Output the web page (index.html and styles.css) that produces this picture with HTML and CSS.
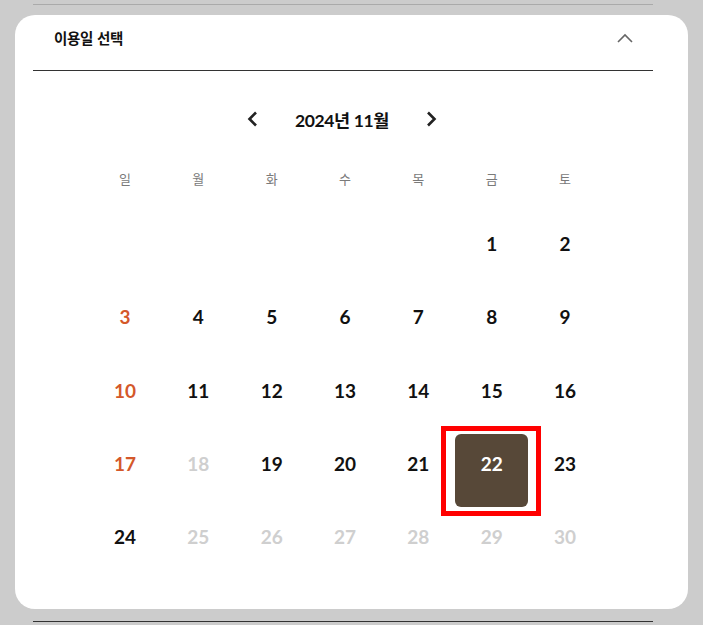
FILE: index.html
```html
<!DOCTYPE html>
<html lang="ko">
<head>
    <meta charset="UTF-8">
    <meta name="viewport" content="width=device-width, initial-scale=1.0">
    <title>이용일 선택</title>
    <link rel="stylesheet" href="styles.css">
</head>
<body>
    <div class="rule rule-top"></div>

    <div class="card">
        <div class="card-header">
            <h2>이용일 선택</h2>
            <svg class="toggle" width="16" height="10" viewBox="0 0 16 10">
                <path d="M1 9 L8 2 L15 9" fill="none" stroke="#666" stroke-width="1.6"/>
            </svg>
        </div>

        <div class="month-nav">
            <svg width="11" height="16" viewBox="0 0 11 16">
                <path d="M9 1.5 L2.5 8 L9 14.5" fill="none" stroke="#222" stroke-width="2.6"/>
            </svg>
            <span class="month-title">2024년 11월</span>
            <svg width="11" height="16" viewBox="0 0 11 16">
                <path d="M2 1.5 L8.5 8 L2 14.5" fill="none" stroke="#222" stroke-width="2.6"/>
            </svg>
        </div>

        <div class="calendar">
            <div class="weekdays">
                <span>일</span><span>월</span><span>화</span><span>수</span><span>목</span><span>금</span><span>토</span>
            </div>
            <div class="days">
                <span class="day empty"></span>
                <span class="day empty"></span>
                <span class="day empty"></span>
                <span class="day empty"></span>
                <span class="day empty"></span>
                <span class="day">1</span>
                <span class="day">2</span>

                <span class="day sun">3</span>
                <span class="day">4</span>
                <span class="day">5</span>
                <span class="day">6</span>
                <span class="day">7</span>
                <span class="day">8</span>
                <span class="day">9</span>

                <span class="day sun">10</span>
                <span class="day">11</span>
                <span class="day">12</span>
                <span class="day">13</span>
                <span class="day">14</span>
                <span class="day">15</span>
                <span class="day">16</span>

                <span class="day sun">17</span>
                <span class="day off">18</span>
                <span class="day">19</span>
                <span class="day">20</span>
                <span class="day">21</span>
                <span class="day selected">22</span>
                <span class="day">23</span>

                <span class="day">24</span>
                <span class="day off">25</span>
                <span class="day off">26</span>
                <span class="day off">27</span>
                <span class="day off">28</span>
                <span class="day off">29</span>
                <span class="day off">30</span>
            </div>
        </div>
    </div>

    <div class="rule rule-bottom"></div>
</body>
</html>
```

FILE: styles.css
```css
body {
    margin: 0;
    padding-top: 4px;
    background-color: #cccccc;
    font-family: Lato, "Noto Sans CJK KR", sans-serif;
    color: #111;
}
.rule {
    width: 620px;
    margin-left: 33px;
}
.rule-top {
    border-top: 1px solid #aaaaaa;
}
.rule-bottom {
    margin-top: 12px;
    border-top: 1px solid #333;
}
.card {
    box-sizing: border-box;
    width: 673px;
    height: 594px;
    margin: 10px 0 0 15px;
    padding: 0 35px 0 18px;
    background-color: white;
    border-radius: 20px;
}
.card-header {
    display: flex;
    align-items: center;
    justify-content: space-between;
    height: 55px;
    padding: 0 20px 0 21px;
    border-bottom: 1px solid #333;
}
.card-header h2 {
    margin: 0 0 10px;
    font-family: "Noto Sans CJK KR", sans-serif;
    font-size: 14.5px;
    font-weight: 700;
    letter-spacing: -0.3px;
}
.toggle {
    margin-bottom: 10px;
}
.month-nav {
    display: flex;
    align-items: center;
    justify-content: center;
    gap: 37px;
    height: 24px;
    margin-top: 36px;
    padding-right: 2px;
}
.month-title {
    font-size: 17.5px;
    font-weight: 700;
    letter-spacing: -0.4px;
}
.calendar {
    margin-top: 38px;
    padding-left: 4px;
}
.weekdays,
.days {
    display: grid;
    grid-template-columns: repeat(7, 73.33px);
    justify-content: center;
}
.weekdays span {
    height: 20px;
    line-height: 20px;
    text-align: center;
    font-family: "Noto Sans CJK KR", sans-serif;
    font-size: 13px;
    color: #7a7a7a;
}
.days {
    margin-top: 25px;
    grid-auto-rows: 73.33px;
}
.day {
    position: relative;
    box-sizing: border-box;
    padding-top: 20px;
    line-height: 20px;
    text-align: center;
    font-size: 19px;
    font-weight: 700;
}
.day.sun {
    color: #d4582a;
}
.day.off {
    color: #cfcfcf;
}
.day.selected {
    background-color: #574838;
    color: white;
    border-radius: 6px;
}
.day.selected::after {
    content: "";
    position: absolute;
    left: -14px;
    top: -8px;
    width: 100px;
    height: 90px;
    box-sizing: border-box;
    border: 5px solid #ff0000;
}
```
